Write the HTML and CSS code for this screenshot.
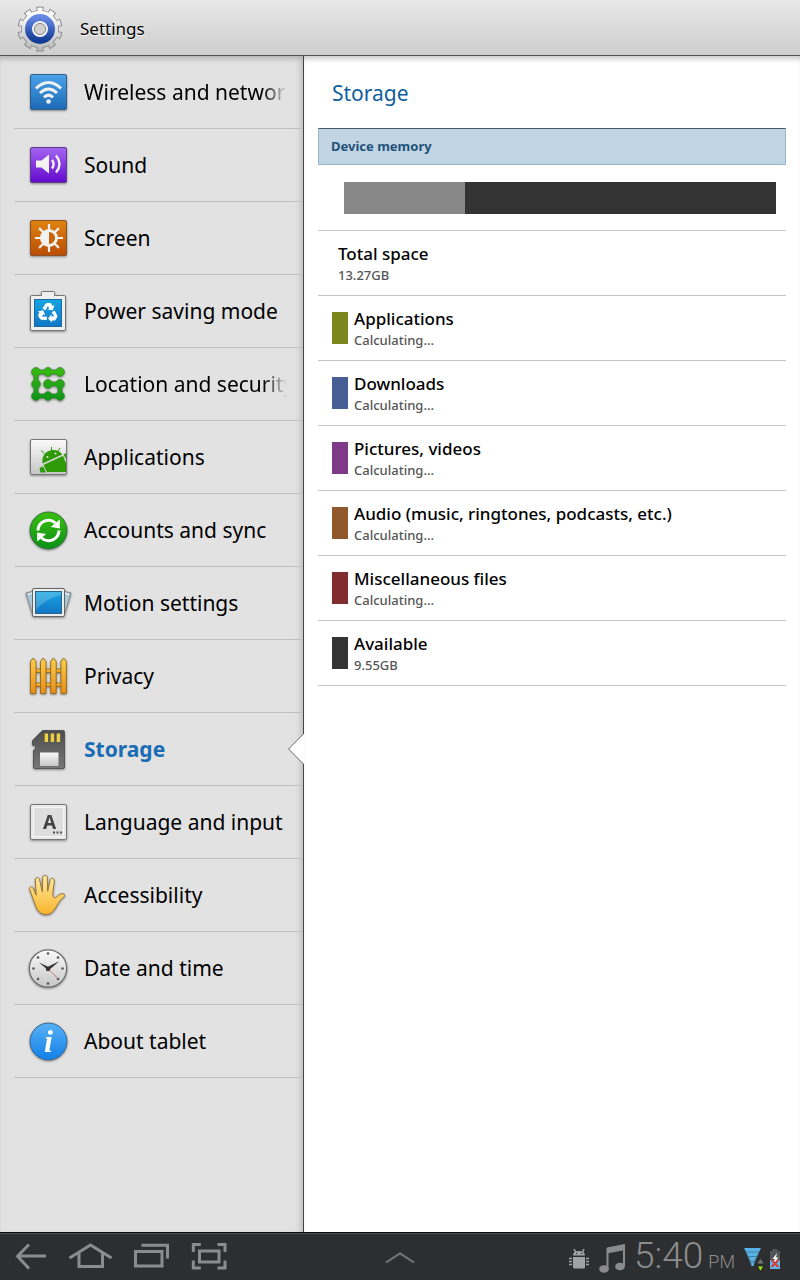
FILE: index.html
```
<!DOCTYPE html>
<html lang="en">
<head>
<meta charset="UTF-8">
<meta name="viewport" content="width=device-width, initial-scale=1.0">
<title>Settings</title>
<link rel="stylesheet" href="styles.css">
</head>
<body>

<!-- shared gradients -->
<svg class="defs" width="0" height="0" aria-hidden="true">
    <defs>
        <linearGradient id="gBlue" x1="0" y1="0" x2="0" y2="1"><stop offset="0" stop-color="#4ba3ea"/><stop offset="1" stop-color="#1c69b4"/></linearGradient>
        <linearGradient id="gPurple" x1="0" y1="0" x2="0" y2="1"><stop offset="0" stop-color="#a566f2"/><stop offset="1" stop-color="#6208cc"/></linearGradient>
        <linearGradient id="gOrange" x1="0" y1="0" x2="0" y2="1"><stop offset="0" stop-color="#df8410"/><stop offset="1" stop-color="#b94c04"/></linearGradient>
        <linearGradient id="gGreen" x1="0" y1="0" x2="0" y2="48" gradientUnits="userSpaceOnUse"><stop offset="0.1" stop-color="#3cc010"/><stop offset="0.9" stop-color="#0a9018"/></linearGradient>
        <linearGradient id="gSilver" x1="0" y1="0" x2="0" y2="1"><stop offset="0" stop-color="#fafafa"/><stop offset="1" stop-color="#c6c6c6"/></linearGradient>
        <linearGradient id="gSky" x1="0" y1="0" x2="0" y2="1"><stop offset="0" stop-color="#16a5e2"/><stop offset="1" stop-color="#1276c4"/></linearGradient>
        <linearGradient id="gWood" x1="0" y1="0" x2="0" y2="1"><stop offset="0" stop-color="#fad04e"/><stop offset="1" stop-color="#e98d16"/></linearGradient>
        <linearGradient id="gCard" x1="0" y1="0" x2="0" y2="1"><stop offset="0" stop-color="#4c4c4c"/><stop offset="1" stop-color="#777"/></linearGradient>
        <linearGradient id="gHand" x1="0" y1="0" x2="0" y2="48" gradientUnits="userSpaceOnUse"><stop offset="0.1" stop-color="#ffe9a0"/><stop offset="0.9" stop-color="#f9b52c"/></linearGradient>
        <linearGradient id="gInfo" x1="0" y1="0" x2="0" y2="1"><stop offset="0" stop-color="#58b0f4"/><stop offset="1" stop-color="#1180e8"/></linearGradient>
        <linearGradient id="gRing" x1="0" y1="0" x2="0" y2="1"><stop offset="0" stop-color="#6488e4"/><stop offset="1" stop-color="#123c96"/></linearGradient>
        <linearGradient id="gGear" x1="0" y1="0" x2="0" y2="48" gradientUnits="userSpaceOnUse"><stop offset="0.2" stop-color="#fafafa"/><stop offset="0.95" stop-color="#b8b8b8"/></linearGradient>
    </defs>
</svg>

<header class="title-bar">
    <svg class="app-icon" viewBox="0 0 48 48" aria-hidden="true">
        <g fill="none" stroke="#8c8c8c" transform="rotate(-90 24 24)">
            <circle cx="24" cy="24" r="19" stroke-width="7" pathLength="100" stroke-dasharray="5.6 4.4" stroke-dashoffset="2.8"/>
            <circle cx="24" cy="24" r="16" stroke-width="6"/>
        </g>
        <g fill="none" stroke="#ececec">
            <path d="M24 3.500v4" stroke="none"/>
            <circle cx="24" cy="24" r="19" stroke="url(#gGear)" stroke-width="5" pathLength="100" stroke-dasharray="4.200 5.800" stroke-dashoffset="-2.900"/>
            <circle cx="24" cy="24" r="16" stroke="url(#gGear)" stroke-width="4.500"/>
        </g>
        <circle cx="24" cy="24" r="11.500" fill="#f4f4f4" stroke="url(#gRing)" stroke-width="7"/>
        <circle cx="24" cy="24" r="5.600" fill="#d0d0d0" stroke="#888"/>
    </svg>
    <h1>Settings</h1>
</header>

<div class="panes">
    <nav class="sidebar">
        <ul>
            <li><a class="clipped" href="#wireless">
                <svg viewBox="0 0 48 48" aria-hidden="true">
                    <rect x="6.500" y="6.500" width="36" height="35" rx="1.500" fill="url(#gBlue)" stroke="#33608c"/>
                    <g fill="none" stroke="#f2f2f2" stroke-width="3">
                        <path d="M12 20.500Q24.500 8.500 37 20.500"/><path d="M16 25Q24.500 17 33 25"/><path d="M20 29.300Q24.500 25 29 29.300"/>
                    </g>
                    <circle cx="24.500" cy="33.500" r="2.300" fill="#f2f2f2"/>
                </svg>
                <span>Wireless and network</span></a></li>
            <li><a href="#sound">
                <svg viewBox="0 0 48 48" aria-hidden="true">
                    <rect x="6.500" y="6.500" width="36" height="35" rx="1.500" fill="url(#gPurple)" stroke="#5c3c8c"/>
                    <path d="M12 19.500h5.500l7.500-6v19l-7.500-6H12z" fill="#f2f2f2"/>
                    <path d="M28 19q3.200 4 0 8.500M32 14.500q7 8.500 0 17" fill="none" stroke="#f2f2f2" stroke-width="2.400"/>
                </svg>
                <span>Sound</span></a></li>
            <li><a href="#screen">
                <svg viewBox="0 0 48 48" aria-hidden="true">
                    <rect x="6.500" y="6.500" width="36" height="35" rx="1.500" fill="url(#gOrange)" stroke="#8a5224"/>
                    <path d="M25 10v28M11 24h28M15.100 14.100l19.800 19.800M34.900 14.100L15.100 33.900" stroke="#f2f2f2" stroke-width="2.200"/>
                    <circle cx="25" cy="24" r="9" fill="#f2f2f2"/>
                    <path d="M25 18a6 6 0 0 1 0 12z" fill="#c96508"/>
                </svg>
                <span>Screen</span></a></li>
            <li><a href="#power">
                <svg viewBox="0 0 48 48" aria-hidden="true">
                    <path d="M8 8.500h9.500v-3q0-1 1-1h11q1 0 1 1v3H40q1.500 0 1.500 1.500v32q0 1.500-1.500 1.500H8q-1.500 0-1.500-1.500V10q0-1.500 1.500-1.500z" fill="#f0f0f0" stroke="#777"/>
                    <rect x="10.500" y="12.500" width="27" height="27" fill="url(#gSky)" stroke="#1a6ba5"/>
                    <g fill="#fff">
                        <g id="recycle"><path d="M18.500 21.500l3-4.700q.6-.8 1.500-.8h3q1 0 1.500.9l1.200 2 1.700-1-1.700 5.300-5.200-.8 1.800-1.200-1.500-2.200-2.300 4.200z"/></g>
                        <use href="#recycle" transform="rotate(120 24 26)"/>
                        <use href="#recycle" transform="rotate(240 24 26)"/>
                    </g>
                </svg>
                <span>Power saving mode</span></a></li>
            <li><a class="clipped" href="#location">
                <svg viewBox="0 0 48 48" aria-hidden="true">
                    <path d="M36 12H12v24h24V24H24" stroke="#4e7c46" stroke-width="5" fill="none"/>
                    <g fill="url(#gGreen)" stroke="#3f8836" stroke-width=".8">
                        <circle cx="12" cy="12" r="4.400"/><circle cx="24" cy="12" r="4.400"/><circle cx="36" cy="12" r="4.400"/>
                        <circle cx="12" cy="24" r="4.400"/><circle cx="24" cy="24" r="4.400"/><circle cx="36" cy="24" r="4.400"/>
                        <circle cx="12" cy="36" r="4.400"/><circle cx="24" cy="36" r="4.400"/><circle cx="36" cy="36" r="4.400"/>
                    </g>
                    <path d="M36 12H12v24h24V24H24" stroke="url(#gGreen)" stroke-width="3.400" fill="none"/>
                </svg>
                <span>Location and security</span></a></li>
            <li><a href="#applications">
                <svg viewBox="0 0 48 48" aria-hidden="true">
                    <rect x="6.500" y="6.500" width="36" height="35" rx="1.500" fill="url(#gSilver)" stroke="#777"/>
                    <g fill="#2e9a08">
                        <path d="M18.700 30.500C17 22 23 17.500 28 17c4.500-.5 8.500 1.500 10.300 4.500z"/>
                        <path d="M19.500 32l19.500-9.200 3 7.200v9H23z"/>
                        <path d="M15.500 35.500q2.500-3 4.500-.5l1.800 4.500h-5.500zM39.500 21.500l2.500-1.500v6z"/>
                        <path d="M27.500 18v-4M20.500 20.500l-3.500-3M34 18l2-3" stroke="#2e9a08"/>
                    </g>
                    <circle cx="23.500" cy="24" r="1" fill="#e8e8e8"/><circle cx="31.500" cy="20.500" r="1" fill="#e8e8e8"/>
                </svg>
                <span>Applications</span></a></li>
            <li><a href="#accounts">
                <svg viewBox="0 0 48 48" aria-hidden="true">
                    <circle cx="24.500" cy="24.500" r="18.500" fill="url(#gGreen)" stroke="#35733a"/>
                    <path d="M14 24.500a10.500 10.500 0 0 1 17.500-7.500M35 24.500a10.500 10.500 0 0 1-17.500 7.500" fill="none" stroke="#fff" stroke-width="3"/>
                    <path d="M35.800 13.500v9l-9-1.500zM13.200 35.500v-9l9 1.500z" fill="#fff"/>
                </svg>
                <span>Accounts and sync</span></a></li>
            <li><a href="#motion">
                <svg viewBox="0 0 48 48" aria-hidden="true">
                    <path d="M2 14l8-2 3 24-4 1zM47 14l-8-2-3 24 4 1z" fill="#a9c8d8" stroke="#888"/>
                    <path d="M4 15.500l6-2M45 15.500l-6-2" stroke="#fff"/>
                    <rect x="8.500" y="9.500" width="32" height="28" rx="1.500" fill="#eee" stroke="#666"/>
                    <rect x="11.500" y="12.500" width="26" height="22" fill="url(#gSky)" stroke="#23658c"/>
                    <path d="M12 13h25v3Q22 19 12 31z" fill="#fff" opacity=".2"/>
                </svg>
                <span>Motion settings</span></a></li>
            <li><a href="#privacy">
                <svg viewBox="0 0 48 48" aria-hidden="true">
                    <g fill="url(#gWood)" stroke="#94681c" stroke-width=".9">
                        <rect x="8" y="17" width="33" height="3.500"/><rect x="8" y="31" width="33" height="3.500"/>
                        <path d="M6.500 41.500V9.500L9.200 6l2.800 3.500v32z"/><path d="M16.500 41.500V9.500L19.200 6l2.800 3.500v32z"/>
                        <path d="M26.700 41.500V9.500L29.400 6l2.800 3.500v32z"/><path d="M36.900 41.500V9.500L39.600 6l2.800 3.500v32z"/>
                    </g>
                </svg>
                <span>Privacy</span></a></li>
            <li class="selected"><a href="#storage" aria-current="page">
                <svg viewBox="0 0 48 48" aria-hidden="true">
                    <path d="M18.500 5.500H39q1.500 0 1.500 1.500v35q0 1.500-1.500 1.500H11q-1.500 0-1.500-1.500V25h2v-4L8.500 20v-4.500z" fill="url(#gCard)" stroke="#555"/>
                    <path d="M20.700 8.500h3.400V17h-3.400zM26.700 8.500h3.400V17h-3.400zM32.700 8.500h3.400V17h-3.400z" fill="#f2cf42"/>
                    <rect x="16" y="27.500" width="18.500" height="13.500" fill="url(#gSilver)"/>
                </svg>
                <span>Storage</span></a></li>
            <li><a href="#language">
                <svg viewBox="0 0 48 48" aria-hidden="true">
                    <rect x="6.500" y="6.500" width="36" height="35" rx="1.500" fill="#e9e9e9" stroke="#777"/>
                    <rect x="9.500" y="9.500" width="30" height="29" fill="#dedede" stroke="#f6f6f6"/>
                    <text class="key-letter" x="25.500" y="31" text-anchor="middle">A</text>
                    <path d="M29 34.500h2M32.500 34.500h2M36 34.500h2" stroke="#555" stroke-width="2"/>
                </svg>
                <span>Language and input</span></a></li>
            <li><a href="#accessibility">
                <svg viewBox="0 0 48 48" aria-hidden="true">
                    <path d="M12.300 36.500C10 31 7 22 5.700 18.500c-.8-2.500 2.400-3.800 3.500-1.500l3 7.200L11.300 9c0-3 3.700-3.300 4.200-.5l2.800 12.300L18.700 6.700c.1-3.200 4.400-3.200 4.600 0l.4 13.600L26.200 9c.7-2.700 4.400-2 4.100.9l-1.500 12.600q-.2 3.500 1.300 4.100 1.500.4 3.400-1.600c1.600-1.800 3.300-2.400 5.500-2.200 2.200.3 2.300 2.300.8 3.200-4.800 3.200-7 10.300-10.800 14.500C24.500 45.500 15 44.500 12.300 36.500z" fill="url(#gHand)" stroke="#94753a"/>
                </svg>
                <span>Accessibility</span></a></li>
            <li><a href="#date">
                <svg viewBox="0 0 48 48" aria-hidden="true">
                    <circle cx="24" cy="24.500" r="18.700" fill="url(#gSilver)" stroke="#6c6c6c" stroke-width="1.200"/>
                    <g fill="#555">
                        <circle cx="24" cy="9.500" r="1.300"/><circle cx="24" cy="39.500" r="1.300"/><circle cx="9.500" cy="24.500" r="1.300"/><circle cx="38.500" cy="24.500" r="1.300"/>
                        <circle cx="14" cy="13.500" r="1.300"/><circle cx="34" cy="13.500" r="1.300"/><circle cx="14" cy="35" r="1.300"/><circle cx="34" cy="35" r="1.300"/>
                    </g>
                    <path d="M24 25l9 8.500" stroke="#c86060" stroke-width=".8"/>
                    <path d="M15 18.500l9 4.200L35.500 17l-11 9.500z" fill="#333"/>
                    <circle cx="24" cy="25" r="2.200" fill="#333"/>
                </svg>
                <span>Date and time</span></a></li>
            <li><a href="#about">
                <svg viewBox="0 0 48 48" aria-hidden="true">
                    <circle cx="24.500" cy="24.500" r="18.500" fill="url(#gInfo)" stroke="#3b668e"/>
                    <text class="info-letter" x="24.500" y="35" text-anchor="middle">i</text>
                </svg>
                <span>About tablet</span></a></li>
        </ul>
    </nav>

    <main class="content">
        <h2>Storage</h2>
        <h3>Device memory</h3>
        <div class="usage">
            <div class="usage-bar"><div class="used" style="width: 28%"></div></div>
        </div>
        <dl>
            <div class="row total"><dt>Total space</dt><dd>13.27GB</dd></div>
            <div class="row apps"><dt>Applications</dt><dd>Calculating...</dd></div>
            <div class="row downloads"><dt>Downloads</dt><dd>Calculating...</dd></div>
            <div class="row pictures"><dt>Pictures, videos</dt><dd>Calculating...</dd></div>
            <div class="row audio"><dt>Audio (music, ringtones, podcasts, etc.)</dt><dd>Calculating...</dd></div>
            <div class="row misc"><dt>Miscellaneous files</dt><dd>Calculating...</dd></div>
            <div class="row available"><dt>Available</dt><dd>9.55GB</dd></div>
        </dl>
    </main>
</div>

<footer class="system-bar">
    <div class="nav-buttons">
        <button type="button" aria-label="Back"><svg viewBox="0 1 60 47"><path d="M46 24H18M29 12.500L17.500 24.300 29 36.500"/></svg></button>
        <button type="button" aria-label="Home"><svg viewBox="0 1 60 47"><path d="M9.500 26L30.500 13l21 13M19 21v13.500h23.500V21"/></svg></button>
        <button type="button" aria-label="Recent apps"><svg viewBox="0 1 60 47"><path d="M15.500 19.500h26.500v14.500H15.500zM21.500 13.300H47.500V26.500"/></svg></button>
        <button type="button" aria-label="Screenshot"><svg viewBox="0 1 60 47"><path d="M19.500 19h19.500v11H19.500zM13.300 20v-7.500h7.500M37.500 12.500H45v7.500M13.300 28.500V36h7.500M37.500 36H45v-7.500"/></svg></button>
    </div>
    <button type="button" aria-label="Open quick panel"><svg class="chevron" viewBox="0 1 60 47"><path d="M16 30.500l14-9 14 9"/></svg></button>
    <div class="status">
        <svg class="android" viewBox="0 0 22 22" aria-hidden="true">
            <path d="M5 7.500q0-4.500 6-4.500t6 4.500zM5 9h12v10q0 1.500-1.500 1.500h-9Q5 20.500 5 19z" fill="#a2a2a2"/>
            <path d="M7.500 4L6 1M14.500 4L16 1M1 10.500h3M1 13.500h3M1 16.500h3M18 10.500h3M18 13.500h3M18 16.500h3" stroke="#a2a2a2" stroke-width="1.600"/>
            <path d="M8 5.500h1.200M13 5.500h1.200" stroke="#2d2e30" stroke-width="1.200"/>
        </svg>
        <svg class="music" viewBox="0 0 28 32" aria-hidden="true">
            <path d="M9.500 26V6L26 2.500V23" fill="none" stroke="#8c8c8c" stroke-width="2"/>
            <path d="M9 4.500L27 1v6L9 10.500z" fill="#8c8c8c"/>
            <ellipse cx="6" cy="26" rx="4.800" ry="3.800" fill="#8c8c8c"/><ellipse cx="22" cy="23.500" rx="4.800" ry="3.800" fill="#8c8c8c"/>
        </svg>
        <time datetime="17:40"><span>5:40</span><small>PM</small></time>
        <svg class="wifi" viewBox="0 0 22 26" aria-hidden="true">
            <path d="M1 2h17l-2 3.500H3zM3.400 6.500h12.200l-2 3.500H5.400zM6 11h7l-2 4H8zM8.500 16h2v4h-2z" fill="#58b4e8"/>
            <path d="M1.500 3h16l-7 17h-2z" fill="#58b4e8" opacity=".6"/>
            <path d="M14.500 17.500L17.500 13l3 4.500z" fill="#777"/><path d="M14.500 20h6l-3 5.500z" fill="#9be417" stroke="#111" stroke-width=".6"/>
        </svg>
        <svg class="battery" viewBox="0 0 12 22" aria-hidden="true">
            <path d="M1 3h2.500V1h5v2H11v9H1z" fill="#555"/><path d="M1 12h10v9H1z" fill="#62b6ea"/>
            <path d="M8 5L3.500 11h2.500l-1.500 5 5-6.500H7z" fill="#fff"/><path d="M2.500 12l7 7M9.500 12l-7 7" stroke="#d8392c" stroke-width="2"/>
        </svg>
    </div>
</footer>

</body>
</html>
```
FILE: styles.css
```
* {
    box-sizing: border-box;
}

body {
    display: flex;
    flex-direction: column;
    min-height: 100vh;
    margin: 0;
    font-family: "Noto Sans", "Open Sans", sans-serif;
    color: #000;
    background-color: #fff;
}

h1, h2, h3, ul, dl, dd {
    margin: 0;
    padding: 0;
}

.defs {
    position: absolute;
}

.title-bar {
    display: flex;
    align-items: center;
    gap: 16px;
    height: 56px;
    padding: 2px 16px 0;
    background: linear-gradient(#e8e8e8, #cecece);
    border-bottom: 1px solid #555;
}

.title-bar h1 {
    font-size: 17px;
    font-weight: 400;
    text-shadow: 0 1px 0 #fff;
}

.app-icon {
    width: 48px;
    height: 48px;
}

.panes {
    display: grid;
    grid-template-columns: 38% 1fr;
    flex: 1;
}

/* left list */
.sidebar {
    padding-left: 14px;
    background-color: #e2e2e2;
    border-right: 1px solid #444;
    box-shadow: inset 0 6px 6px -4px #aaa, inset -6px 0 6px -4px #bbb;
}

.sidebar ul {
    list-style: none;
}

.sidebar li {
    position: relative;
    border-bottom: 1px solid #c0c0c0;
}

.sidebar a {
    display: flex;
    align-items: center;
    gap: 12px;
    height: 72px;
    padding: 0 16px 0 10px;
    font-size: 21px;
    color: #000;
    text-decoration: none;
    white-space: nowrap;
}

.sidebar svg {
    flex: none;
    width: 48px;
    height: 48px;
    filter: drop-shadow(0 1px 1px rgba(0, 0, 0, 0.4));
}

.sidebar span {
    flex: 1;
    min-width: 0;
}

.sidebar .clipped span {
    overflow: hidden;
    -webkit-mask-image: linear-gradient(to left, transparent, #000 24px);
    mask-image: linear-gradient(to left, transparent, #000 24px);
}

.sidebar .selected a {
    font-weight: 700;
    color: #1a6cb4;
}

/* arrow pointing out of the content pane */
.selected::after {
    content: "";
    position: absolute;
    top: 20px;
    right: -1px;
    width: 16px;
    height: 32px;
    background-color: #666;
    clip-path: polygon(100% 0, 100% 100%, 0 50%);
}

.selected::before {
    content: "";
    position: absolute;
    z-index: 1;
    top: 21px;
    right: -1px;
    width: 15px;
    height: 30px;
    background-color: #fff;
    clip-path: polygon(100% 0, 100% 100%, 0 50%);
}

.key-letter {
    font: 700 19px "Noto Sans", sans-serif;
    fill: #444;
}

.info-letter {
    font: italic 700 32px "Liberation Serif", serif;
    fill: #fff;
}

/* right pane */
.content {
    padding: 0 14px;
    box-shadow: inset 0 6px 6px -4px #bbb;
}

.content h2 {
    padding: 2px 14px 0;
    font-size: 21px;
    font-weight: 400;
    line-height: 70px;
    color: #0f5e9c;
}

.content h3 {
    height: 37px;
    padding: 0 12px;
    font-size: 13px;
    line-height: 35px;
    color: #1f5278;
    background-color: #c2d5e4;
    border: 1px solid #9cb4c8;
    border-top-color: #44586a;
}

.usage {
    padding: 17px 10px 16px 26px;
    border-bottom: 1px solid #c4c4c4;
}

.usage-bar {
    height: 32px;
    background-color: #333;
}

.used {
    height: 100%;
    background-color: #888;
}

.row {
    display: grid;
    grid-template-columns: 16px 1fr;
    column-gap: 6px;
    align-content: center;
    height: 65px;
    padding: 0 14px;
    border-bottom: 1px solid #c4c4c4;
}

.row::before {
    content: "";
    grid-row: 1 / 3;
    align-self: center;
    height: 32px;
}

.row dt {
    font-size: 17px;
    font-weight: 500;
    line-height: 24px;
}

.row dd {
    font-size: 13px;
    font-weight: 500;
    line-height: 18px;
    color: #555;
}

.total {
    grid-template-columns: 1fr;
    padding: 0 20px;
}

.total::before {
    display: none;
}

.apps::before { background-color: #7b861c; }
.downloads::before { background-color: #485f96; }
.pictures::before { background-color: #7e3a86; }
.audio::before { background-color: #90582b; }
.misc::before { background-color: #822d2d; }
.available::before { background-color: #333; }

/* bottom bar */
.system-bar {
    display: grid;
    grid-template-columns: 1fr auto 1fr;
    height: 48px;
    background-color: #2d2e30;
    border-top: 1px solid #0c0c0c;
    box-shadow: inset 0 1px 0 #4a4c4e;
}

.nav-buttons {
    display: flex;
}

.system-bar button {
    width: 60px;
    height: 47px;
    padding: 0;
    background: none;
    border: none;
    cursor: pointer;
}

.system-bar button svg {
    display: block;
    width: 60px;
    height: 47px;
    fill: none;
    stroke: #8c8c8c;
    stroke-width: 3;
}

.system-bar button .chevron {
    stroke: #777;
    stroke-width: 2;
}

.status {
    display: flex;
    align-items: center;
    justify-content: flex-end;
    gap: 8px;
    padding-right: 19px;
}

.status svg {
    flex: none;
}

.android { width: 22px; height: 22px; }
.music { width: 28px; height: 32px; }
.wifi { width: 22px; height: 26px; }
.battery { width: 12px; height: 22px; }

.status .battery {
    margin-left: -4px;
}

.status time {
    display: flex;
    align-items: baseline;
    gap: 5px;
    font-family: Roboto, sans-serif;
    font-size: 37px;
    font-weight: 300;
    line-height: 46px;
    color: #8c8c8c;
    white-space: nowrap;
}

.status small {
    font-size: 18px;
}
```
